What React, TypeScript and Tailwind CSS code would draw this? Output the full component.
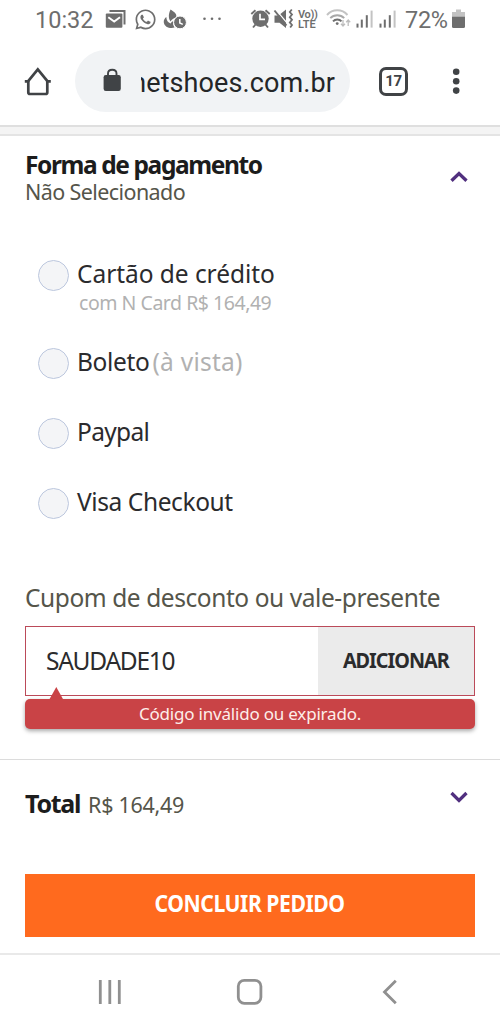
import type { ReactNode } from "react";
import { FaWhatsapp } from "react-icons/fa";

function StatusBar() {
  return (
    <div className="flex h-10 items-center pl-[35px] text-[#6e6e6e] font-['Roboto',sans-serif]">
      <span className="w-[70px] whitespace-nowrap text-[23.5px] leading-10">10:32</span>
      <svg width="22" height="40" viewBox="105 0 22 40" fill="none">
        <path d="M109.5 11H124.5V24.5" stroke="currentColor" strokeWidth="2" />
        <rect x="105.8" y="13.6" width="16.6" height="14.2" rx="1" fill="currentColor" />
        <path d="M108.3 17.2L114.2 21.6L120 17.2" stroke="#fff" strokeWidth="2" />
      </svg>
      <FaWhatsapp className="-mt-[2px] ml-[7px] size-[23px]" />
      <svg className="ml-[6px]" width="24" height="40" viewBox="163 0 24 40" fill="none">
        <path
          d="M170.6 9.5C174.5 12 177.5 14.5 176 17.2C173 18.6 171.5 19.8 170.6 21.4C168.2 18.5 168.4 13.5 170.6 9.5Z"
          fill="currentColor"
        />
        <path
          d="M166.3 17C166.4 20.4 168 22.6 170.6 23.4C171.2 22.4 172 21.6 173.2 21C172.8 23.4 173.2 25.6 174.6 27.6C169.5 28.8 164.6 27 163.8 22.4C163.5 20.2 164.6 18.4 166.3 17Z"
          fill="currentColor"
        />
        <circle cx="180" cy="22.4" r="6.4" fill="currentColor" stroke="#fff" strokeWidth="1" />
        <path d="M179.8 19V23L182.8 24.4" stroke="#fff" strokeWidth="1.5" />
      </svg>
      <svg className="ml-[15px]" width="24" height="40" viewBox="202 0 24 40" fill="currentColor">
        <circle cx="204.5" cy="18.7" r="1.3" />
        <circle cx="212" cy="18.7" r="1.3" />
        <circle cx="219.5" cy="18.7" r="1.3" />
      </svg>
      <svg className="ml-[24px]" width="22" height="40" viewBox="250 0 22 40" fill="none">
        <circle cx="260.5" cy="18.8" r="8.2" fill="currentColor" />
        <path d="M251.3 14L255.5 10.2M269.7 14L265.5 10.2M255.5 24.5L253 27.5M265.5 24.5L268 27.5" stroke="currentColor" strokeWidth="1.9" />
        <path d="M260 13.8V19.4H265" stroke="#fff" strokeWidth="1.7" />
      </svg>
      <svg className="ml-px" width="22" height="40" viewBox="273 0 22 40" fill="none">
        <path d="M274.5 15.6H278.5L286 9.5V28L279.5 22.8H274.5Z" fill="currentColor" />
        <path d="M276 9.8L287.5 23.5" stroke="#fff" strokeWidth="1.2" />
        <path d="M274.5 10.5L286.5 25.5" stroke="currentColor" strokeWidth="2" />
        <path d="M291.8 9.5L289.8 12L292 14.6L289.8 17.2L292 19.8L289.8 22.4L292 25L290.2 27.6" stroke="currentColor" strokeWidth="1.8" />
      </svg>
      <span className="ml-[3px] flex w-[22px] flex-col text-[11px] font-semibold leading-[10px]">
        <span className="h-[10px] whitespace-nowrap tracking-[-0.3px]">Vo))</span>
        <span className="h-[10px] text-[11px]">LTE</span>
      </span>
      <svg className="ml-[6px]" width="25" height="40" viewBox="326 0 25 40" fill="none">
        <path d="M327 15C332.5 8.8 342 8.8 347.5 15" stroke="#c3c3c3" strokeWidth="2" />
        <path d="M330.3 18.2C334 14.2 340.5 14.2 344.2 18.2" stroke="#a8a8a8" strokeWidth="1.9" />
        <path d="M333 21.3C335.2 18.8 339.4 18.8 341.5 21.3" stroke="currentColor" strokeWidth="1.9" />
        <circle cx="337.2" cy="23.6" r="1.4" fill="currentColor" />
        <path d="M343 20V26M341 23.8L343 26L345 23.8M348.2 26V20M346.2 22.2L348.2 20L350.2 22.2" stroke="#bdbdbd" strokeWidth="1.3" />
      </svg>
      <Signal className="ml-[5px]" />
      <Signal className="ml-[5px]" />
      <span className="ml-[8px] w-[46px] whitespace-nowrap text-[23.5px] leading-10 tracking-[-0.3px]">72%</span>
      <svg width="16" height="40" viewBox="451 0 16 40" fill="currentColor">
        <path d="M456 9.5H461V12H465V17H452V12H456Z" fill="#c3c3c3" />
        <path d="M452 16.8H465V26.5Q465 28 463.5 28H453.5Q452 28 452 26.5Z" />
      </svg>
    </div>
  );
}

function Signal({ className }: { className: string }) {
  return (
    <svg className={className} width="18" height="40" viewBox="356 0 18 40" fill="currentColor">
      <rect x="356.5" y="23.6" width="2" height="4" />
      <rect x="360.8" y="19.6" width="2" height="8" />
      <rect x="365.8" y="15.2" width="2" height="12.4" />
      <rect x="370.6" y="10.6" width="2" height="17" fill="#c3c3c3" />
    </svg>
  );
}

function BrowserBar() {
  return (
    <div className="flex h-[85px] items-start pt-[10px]">
      <svg className="ml-[22px] mt-[15px]" width="32" height="32" viewBox="22 65 32 32" fill="none">
        <path d="M28.3 81V92.2Q28.3 94 30 94H45.6Q47.3 94 47.3 92.2V81" stroke="#404346" strokeWidth="2.7" />
        <path d="M24.8 81.3H28L37.8 69.4L47.6 81.3H50.8" stroke="#404346" strokeWidth="2.7" />
      </svg>
      <div className="ml-[21px] flex h-[62px] w-[275px] items-center rounded-full bg-[#f1f3f5]">
        <svg className="ml-[27px]" width="20" height="26" viewBox="102 69 20 26" fill="none">
          <path d="M108 77V74.5C108 69.5 116.5 69.5 116.5 74.5V77" stroke="#404346" strokeWidth="1.9" />
          <rect x="103.6" y="76" width="17.2" height="16" rx="2.2" fill="#404346" />
        </svg>
        <div className="ml-[19px] flex h-10 w-[199px] justify-end overflow-hidden whitespace-nowrap pr-[5px] text-[27px] leading-[45px] tracking-[0.1px] text-[#242628] font-['Roboto',sans-serif]">
          netshoes.com.br
        </div>
      </div>
      <div className="ml-[29px] mt-[17px] flex size-[29px] items-center justify-center rounded-[7px] border-3 border-[#404346] text-[15px] font-bold tracking-[-0.3px] text-[#404346] font-['Roboto',sans-serif]">
        17
      </div>
      <svg className="ml-[41px] mt-[15px]" width="14" height="32" viewBox="449 65 14 32" fill="#404346">
        <circle cx="456.2" cy="71.8" r="3.3" />
        <circle cx="456.2" cy="81.2" r="3.3" />
        <circle cx="456.2" cy="90.6" r="3.3" />
      </svg>
    </div>
  );
}

function Chevron({ up = false }: { up?: boolean }) {
  return (
    <svg width="18" height="12" viewBox="0 0 18 12" fill="none" stroke="#51307f" strokeWidth="3.3">
      <path d={up ? "M1.5 9.8L9 2.6L16.5 9.8" : "M1.5 2L9 9.4L16.5 2"} />
    </svg>
  );
}

function Option({ children, className }: { children: ReactNode; className: string }) {
  return (
    <label className={`flex items-start pl-[38px] ${className}`}>
      <span className="size-[31px] shrink-0 rounded-full border-[1.5px] border-[#bcc7de] bg-[#f4f5f7]" />
      <span className="-mt-[2px] ml-[8px] whitespace-nowrap text-[24.5px] leading-8 text-[#2b2b2d]">{children}</span>
    </label>
  );
}

export default function App() {
  return (
    <div className="flex h-[1028px] w-[500px] flex-col overflow-hidden bg-white font-['Noto_Sans',sans-serif]">
      <StatusBar />
      <BrowserBar />
      <div className="h-[11px] shrink-0 border-b-2 border-t-2 border-b-[#e4e4e4] border-t-[#dfdfdf] bg-[#f4f4f4]" />

      <section className="flex h-[623px] shrink-0 flex-col">
        <div className="flex h-[124px] justify-between pl-[25px] pr-[32px]">
          <div className="flex flex-col whitespace-nowrap pt-[16px]">
            <h2 className="text-[24.5px] font-bold leading-[26px] tracking-[-1.4px] text-[#1c1c1c]">Forma de pagamento</h2>
            <p className="text-[21.5px] leading-[27px] tracking-[-0.6px] text-[#55554a]">Não Selecionado</p>
          </div>
          <div className="pt-[35px]">
            <Chevron up />
          </div>
        </div>
        <Option className="h-[87.5px]">
          <span className="block tracking-[-0.05px]">Cartão de crédito</span>
          <span className="-mt-px block pl-[2px] text-[19.5px] leading-7 tracking-[-0.47px] text-[#b1b1b1]">com N Card R$ 164,49</span>
        </Option>
        <Option className="h-[70px]">
          <span className="tracking-[-0.35px]">Boleto</span>
          <span className="ml-[3px] tracking-[0.25px] text-[#b1b1b1]">(à vista)</span>
        </Option>
        <Option className="h-[70.5px]">
          <span className="tracking-[-0.65px]">Paypal</span>
        </Option>
        <Option className="h-[92px]">
          <span className="tracking-[-0.4px]">Visa Checkout</span>
        </Option>

        <div className="px-[25px]">
          <p className="whitespace-nowrap text-[24.5px] leading-9 tracking-[-0.43px] text-[#55554a]">Cupom de desconto ou vale-presente</p>
          <div className="mt-[10px] flex h-[70px] border-[1.5px] border-[#bb4a59]">
            <span className="flex-1 pl-[20px] text-[24.5px] leading-[67px] tracking-[-1.25px] text-[#2b2b2d]">SAUDADE10</span>
            <button className="w-[156px] bg-[#ebebeb] pb-[4px] text-[22px] font-bold text-[#2b2b2d]">
              <span className="inline-block scale-x-90 tracking-[-1.1px]">ADICIONAR</span>
            </button>
          </div>
          <div className="relative mt-[3px] flex h-[30px] items-center justify-center rounded-[5px] bg-[#c94346] text-[17px] text-[#fdeeea] shadow-[0_2px_4px_rgba(0,0,0,0.35)]">
            <svg className="absolute -top-[13px] left-[24px]" width="15" height="14" viewBox="0 0 15 14" fill="#c94346">
              <path d="M7.3 1L14.5 14H0Z" />
            </svg>
            <span className="pb-px tracking-[-0.2px]">Código inválido ou expirado.</span>
          </div>
        </div>
      </section>

      <section className="h-[194px] shrink-0 border-t border-[#dcdcdc] px-[25px]">
        <div className="flex justify-between pr-[7px] pt-[27px]">
          <p className="flex items-baseline whitespace-nowrap leading-8">
            <b className="text-[25px] tracking-[-1.3px] text-[#1c1c1c]">Total</b>
            <span className="ml-[8px] text-[21.5px] tracking-[-0.3px] text-[#55554a]">R$ 164,49</span>
          </p>
          <div className="pt-[4px]">
            <Chevron />
          </div>
        </div>
        <button className="mt-[53px] h-[62.5px] w-full bg-[#ff6a1e] pb-[3px] text-[23.5px] font-bold text-white">
          <span className="inline-block scale-x-90 tracking-[-0.5px]">CONCLUIR PEDIDO</span>
        </button>
      </section>

      <nav className="h-[75px] shrink-0 border-t-2 border-[#e9e9e9]">
        <svg width="500" height="73" viewBox="0 955 500 73" fill="none" stroke="#909090" strokeWidth="2.8">
          <path d="M100.3 980V1004M109.8 980V1004M119.3 980V1004" />
          <rect x="238.3" y="980.3" width="22.6" height="23" rx="6" />
          <path d="M395.8 980.8L384.5 992L395.8 1003.2" />
        </svg>
      </nav>
    </div>
  );
}
